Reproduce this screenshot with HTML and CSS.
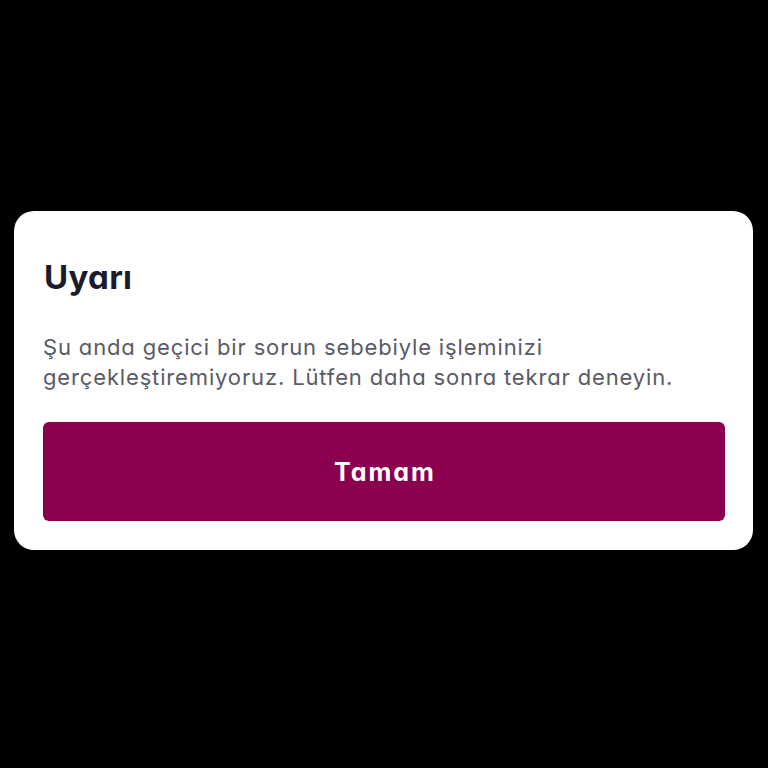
FILE: index.html
```html
<!DOCTYPE html>
<html lang="tr">
<head>
<meta charset="utf-8">
<link rel="stylesheet" href="styles.css">
</head>
<body>
<div class="page">
  <div class="dialog">
    <h1 class="title">Uyarı</h1>
    <p class="message">Şu anda geçici bir sorun sebebiyle işleminizi gerçekleştiremiyoruz. Lütfen daha sonra tekrar deneyin.</p>
    <button class="btn">Tamam</button>
  </div>
</div>
</body>
</html>
```

FILE: styles.css
```css
html, body {
  margin: 0;
  padding: 0;
  background: #000;
  width: 768px;
  height: 768px;
  overflow: hidden;
}
.page {
  width: 768px;
  height: 768px;
  display: flex;
  flex-direction: column;
  padding-top: 211px;
  padding-left: 14px;
  box-sizing: border-box;
}
.dialog {
  width: 739px;
  height: 339px;
  box-sizing: border-box;
  background: #fff;
  border-radius: 20px;
  padding: 46px 28px 29px 29px;
  display: flex;
  flex-direction: column;
  font-family: Inter, "Noto Sans", sans-serif;
  font-feature-settings: "cv11" 1;
}
.title {
  margin: 0 0 0 1px;
  font-size: 33px;
  line-height: 40px;
  font-weight: 700;
  letter-spacing: 0.3px;
  color: #1b1b2b;
}
.message {
  margin: 35px 0 0 0;
  font-size: 22px;
  line-height: 30px;
  font-weight: 400;
  letter-spacing: 0.85px;
  color: #5a5a66;
  width: 680px;
}
.btn {
  margin-top: auto;
  height: 99px;
  width: 100%;
  border: none;
  border-radius: 6px;
  background: #8a004f;
  color: #fff;
  font-family: Inter, "Noto Sans", sans-serif;
  font-feature-settings: "cv11" 1;
  font-size: 25px;
  font-weight: 700;
  letter-spacing: 2px;
  padding: 0 0 0 2px;
}
```
